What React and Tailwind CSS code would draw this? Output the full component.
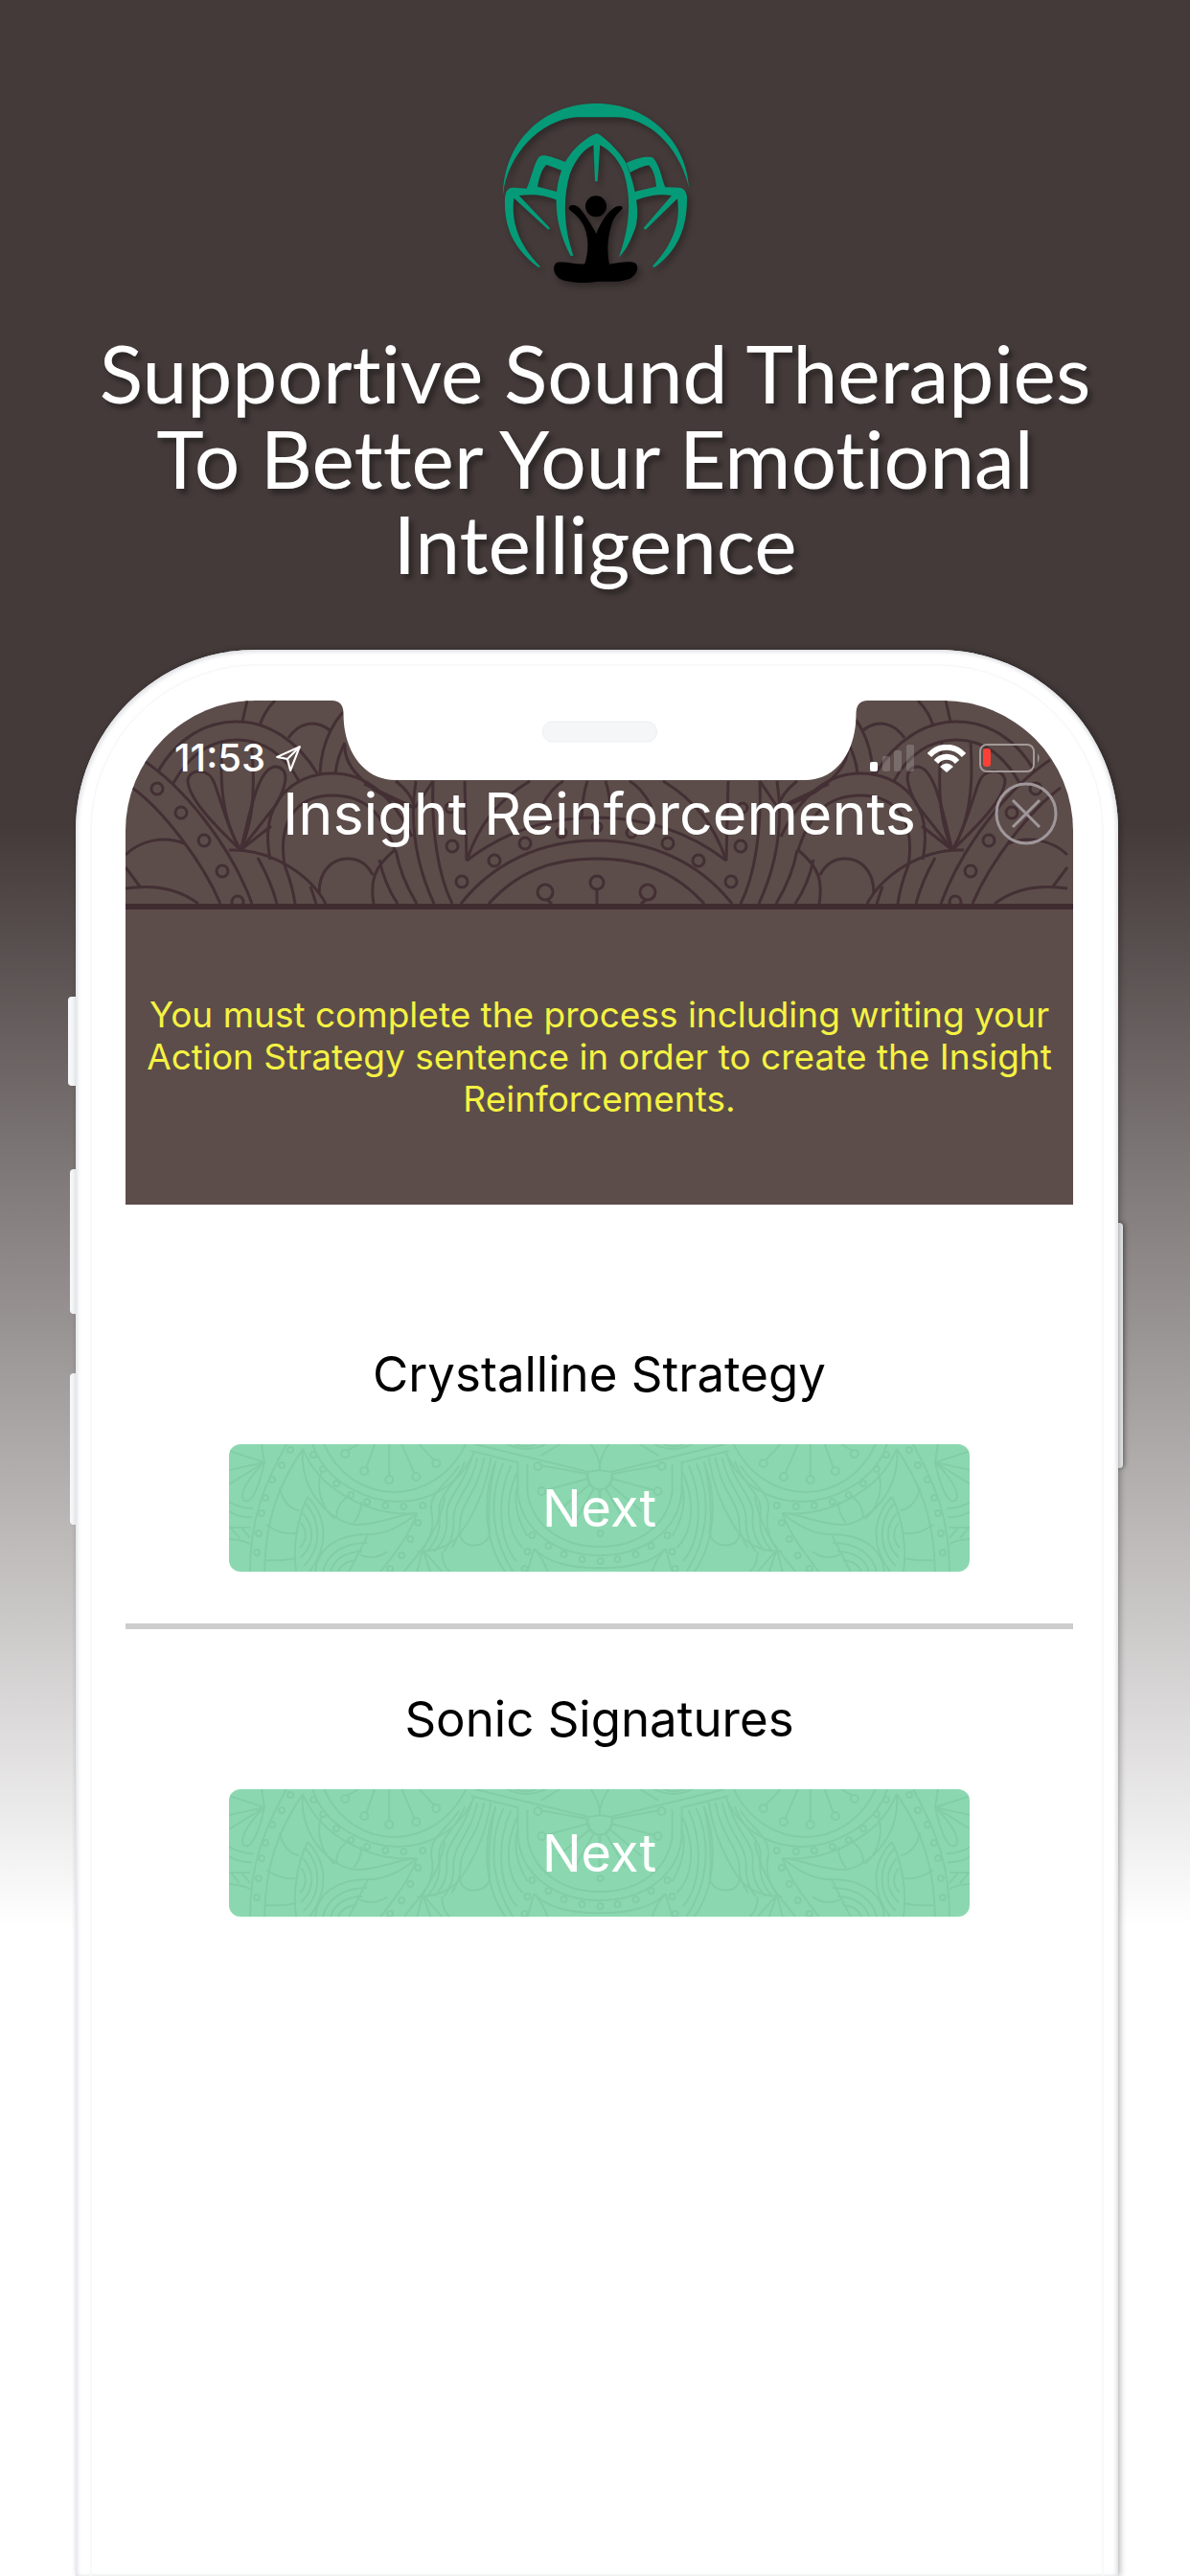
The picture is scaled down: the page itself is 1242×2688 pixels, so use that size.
const STRATEGIES = [
  { id: "crystalline", title: "Crystalline Strategy" },
  { id: "sonic", title: "Sonic Signatures" },
];

// Dots as [cx, cy, r], drawn on one half and mirrored
const HEADER_DOTS = [
  [164, 823, 6],
  [189, 848, 6],
  [213, 877, 6],
  [232, 909, 6],
  [248, 941, 6],
  [470, 843, 5],
  [472, 883, 6],
  [482, 920, 6],
  [516, 898, 6],
  [548, 880, 6],
  [586, 869, 5],
  [569, 931, 8],
];

const HEADER_LINES = [
  // left scallops
  "M165 805C185 770 215 753 247 753S310 772 331 807",
  "M181 817C198 787 220 772 247 772S297 787 312 815",
  "M258 731L253 753M287 731Q276 742 271 757",
  "M301 770C310 757 320 755 326 755S338 757 344 762",
  "M358 743C345 758 335 780 334 807M360 775Q352 790 350 807",
  "M360 777C358 805 395 833 433 843",
  // fan
  "M251 887C225 862 196 833 196 814C198 802 218 800 224 818C232 840 238 865 251 887",
  "M232 775C228 830 236 862 251 887M262 775C268 830 262 862 251 887",
  "M251 887C260 855 268 800 288 800C304 802 298 822 288 840L251 887M283 862L251 887",
  // middle arch
  "M282 897C270 838 305 807 347 807C388 807 414 840 430 873",
  "M297 903C290 860 307 830 347 830C382 830 400 850 412 887",
  "M412 887C390 905 386 920 390 943",
  "M333 932C333 907 348 896 363 896S385 905 389 913",
  "M380 818L433 843M413 815Q430 828 433 843M452 815L433 843",
  "M396 897Q401 922 415 943M413 887Q418 915 435 943",
  "M434 815Q424 880 453 943M452 815C450 870 458 915 472 943",
  // central flower
  "M485 815L487 898C500 860 520 835 553 815",
  "M487 898C530 865 575 853 623 853",
  "M588 815Q575 822 565 842M613 815Q608 830 607 853",
  "M481 943C515 900 565 877 623 877",
  "M510 943C540 910 575 896 623 896",
  "M571 939L576 943",
  // diagonal band and lower left
  "M149 793C190 820 240 880 263 943M138 822C170 845 212 900 230 943",
  "M131 892C145 878 170 871 192 880M131 905L146 925",
  "M131 927C165 922 190 930 207 943",
  "M239 887C285 885 325 915 340 943",
  "M269 895Q283 920 289 943M297 903Q305 923 308 943M324 925L330 943",
];

const BUTTON_DOTS = [
  [121, 10, 4],
  [141, 28, 4],
  [167, 37, 4],
  [195, 34, 4],
  [216, 20, 4],
  [88, 11, 3],
  [98, 26, 3],
  [112, 41, 3],
  [127, 53, 3],
  [144, 60, 3],
  [163, 64, 3],
  [182, 65, 3],
  [202, 64, 3],
  [197, 82, 3],
  [189, 99, 3],
  [180, 116, 3],
  [168, 130, 3],
  [64, 6, 3],
  [55, 22, 3],
  [45, 37, 3],
  [38, 56, 3],
  [34, 72, 3],
  [31, 93, 3],
  [29, 113, 3],
  [316, 95, 3],
  [333, 106, 3],
  [349, 115, 3],
  [368, 120, 3],
  [311, 112, 3],
  [308, 130, 3],
  [322, 23, 4],
  [326, 49, 4],
];

const BUTTON_LINES = [
  // big medallion with stems
  "M99 0C115 35 145 50 172 50S230 35 247 0",
  "M87 0C100 40 145 60 176 60S240 45 256 7",
  "M77 5C95 50 150 76 196 72",
  "M135 0L123 7M152 0L143 25M167 0V33M180 0L193 30M198 0L214 17",
  // left band
  "M77 5C50 45 38 80 37 133M60 0C35 45 22 80 22 133",
  "M37 19L0 7M37 19L0 27M37 19L0 42M37 19L34 0M37 19C25 30 10 50 15 58C22 64 30 50 37 19",
  "M0 60Q12 67 25 67M0 70Q12 77 24 76M0 87H22M2 87L11 98M13 87L22 98M0 99Q12 99 22 104",
  "M53 45C55 60 65 68 73 69M39 84C50 92 62 94 70 93M38 121Q55 122 70 119",
  // leaf under the medallion
  "M77 5C72 50 110 85 135 84S180 72 196 72",
  "M96 30C90 48 98 68 110 78M112 76C112 66 118 58 126 53M130 82Q138 72 138 60",
  "M82 55C72 75 66 105 70 133",
  "M82 55C104 78 103 108 84 133M80 62C96 80 97 108 78 127M77 72C89 86 90 104 75 118M75 82C81 90 82 100 74 108",
  "M90 133C92 110 112 92 150 94M98 133C102 115 118 103 144 103M106 133C109 120 122 112 139 112M114 133Q118 122 133 121M150 94Q172 92 196 72",
  "M136 115Q150 122 165 112M145 94L125 133",
  "M196 72C188 95 172 115 158 133M225 55Q218 90 196 116C190 124 184 130 183 133",
  // curved ribs
  "M240 22C228 42 208 50 211 70Q216 92 200 112",
  "M246 18C236 44 217 52 219 72Q222 96 206 112",
  "M253 14C244 46 225 56 227 76Q229 96 214 112",
  "M259 14C252 48 233 58 234 80Q235 98 224 112",
  "M266 14C260 50 240 62 241 84Q240 98 232 108",
  "M196 112Q225 112 240 95C258 70 268 45 273 14",
  "M241 92C240 110 270 110 272 92Q268 60 278 18M222 112Q222 126 230 133",
  "M278 18C262 60 268 105 288 133M286 20C268 60 276 102 296 133M294 22C276 62 284 105 300 122M300 30C286 62 290 92 306 108M301 42Q294 68 311 96",
  "M202 110L196 133M202 110L210 133M202 110L222 133",
  // central shield
  "M252 7L301 19V50C305 90 340 116 387 116",
  "M311 21V50C316 84 345 107 387 107M256 0L375 29L387 27M324 22L374 31",
  "M374 31C374 53 400 53 400 31M374 36L330 48M377 41L343 70M381 45L360 82M387 46V86",
  "M377 0Q386 12 387 27M318 109C330 122 355 130 387 129M318 109L311 133M318 109Q328 120 332 133",
  "M290 0Q310 10 330 0M298 0Q310 5 320 0M325 12L345 0",
];

function Mirrored({ lines, dots, flip }) {
  const half = (
    <>
      {lines.map((d) => (
        <path key={d} d={d} />
      ))}
      {dots.map(([cx, cy, r]) => (
        <circle key={`${cx}-${cy}`} cx={cx} cy={cy} r={r} />
      ))}
    </>
  );

  return (
    <>
      <g>{half}</g>
      <g transform={`translate(${flip} 0) scale(-1 1)`}>{half}</g>
    </>
  );
}

function HeaderPattern() {
  return (
    <svg
      aria-hidden="true"
      viewBox="131 731 989 212"
      preserveAspectRatio="xMidYMid slice"
      className="absolute inset-0 size-full fill-none stroke-[#432f34] stroke-3"
    >
      <Mirrored lines={HEADER_LINES} dots={HEADER_DOTS} flip={1245} />
      <circle cx="623" cy="921" r="7" />
      <circle cx="623" cy="863" r="5" />
      <path d="M623 928V943" />
    </svg>
  );
}

function ButtonPattern() {
  return (
    <svg
      aria-hidden="true"
      viewBox="0 0 772 133"
      preserveAspectRatio="xMidYMid slice"
      className="absolute inset-0 size-full fill-none stroke-[#82cda6] stroke-2"
    >
      <Mirrored lines={BUTTON_LINES} dots={BUTTON_DOTS} flip={773} />
      <circle cx="387" cy="93" r="3" />
      <circle cx="387" cy="122" r="3" />
    </svg>
  );
}

function Logo() {
  return (
    <svg
      aria-hidden="true"
      viewBox="0 0 720 660"
      className="h-[220px] w-[240px] drop-shadow-[3px_4px_3px_rgba(0,0,0,0.3)]"
    >
      <g fill="#059b78">
        <path d="M72 340C76 170 200 54 365 54C520 54 645 165 654 316C622 185 525 97 425 97H300C190 105 84 215 72 340Z" />
        <path d="M365 148C380 150 440 205 458 242C490 320 505 410 480 460C465 500 450 520 434 536C470 440 475 350 450 270C430 220 395 190 365 180C330 190 300 225 281 275C262 340 258 430 292 530L284 532C235 440 225 340 258 255C280 205 330 160 365 148Z" />
        <path d="M355 178H376L368 298H360Z" />
        <path d="M146 320C160 290 170 240 184 222C195 212 210 214 276 240L266 268C235 255 215 248 207 246C190 265 185 290 180 314L240 330L244 358C200 338 160 337 122 342L219 444L214 449L106 350C96 430 125 500 189 565L183 567C105 510 74 440 78 350C80 325 90 317 105 317Z" />
        <path d="M580 316C568 285 562 245 542 224C530 218 500 220 458 240L470 270C500 255 520 246 530 248C545 265 550 290 552 314L484 330L486 358C530 340 565 337 600 342L512 444L518 449L618 352C630 430 600 500 540 563L546 567C620 515 650 440 648 345C645 325 635 317 620 317Z" />
      </g>
      <g fill="#000">
        <circle cx="363" cy="376" r="33" />
        <path d="M280 376C290 368 303 372 312 382C335 410 352 440 364 462C375 430 400 390 424 378C437 372 450 376 445 384C430 400 418 410 410 440C398 480 398 520 405 557C440 552 470 546 487 554C500 568 490 590 470 602C430 618 400 608 363 612C330 618 280 616 252 604C228 590 226 562 240 552C265 546 300 560 328 556C340 520 340 480 330 450C320 420 300 402 281 388C277 384 277 380 280 376Z" />
      </g>
    </svg>
  );
}

function Notch() {
  return (
    <svg
      aria-hidden="true"
      viewBox="346 731 559 83"
      className="absolute top-0 left-1/2 w-[559px] -translate-x-1/2"
    >
      <path
        d="M346 731Q358 731 358 745C358 785 380 814 412 814H840C872 814 893 785 893 745Q893 731 905 731Z"
        fill="#fff"
      />
      <rect x="566" y="753" width="119" height="21" rx="10" fill="#f5f6f7" stroke="#eceeef" />
    </svg>
  );
}

function StatusBar() {
  return (
    <div className="relative flex h-[30px] items-center justify-between pr-[34px] pl-[51px] text-white">
      <div className="flex items-center gap-[10px]">
        <span className="text-[40px] leading-[30px] font-medium">11:53</span>
        <svg aria-hidden="true" viewBox="0 0 26 27" className="h-[29px] w-[28px] fill-none stroke-white stroke-2">
          <path d="M24 2L2 12L12 14L15 25Z" strokeLinejoin="round" />
          <path d="M24 2L12 14" />
        </svg>
      </div>

      <div className="flex items-center gap-[14px]">
        <svg aria-hidden="true" viewBox="0 0 46 28" className="h-7 w-[46px] fill-white">
          <rect y="18" width="8" height="10" rx="2" />
          <g opacity="0.18">
            <rect x="13" y="12" width="8" height="16" rx="2" />
            <rect x="25" y="6" width="8" height="22" rx="2" />
            <rect x="38" width="8" height="28" rx="2" />
          </g>
        </svg>
        <svg aria-hidden="true" viewBox="0 0 40 29" className="h-[29px] w-10 fill-none stroke-white stroke-6">
          <path d="M2 11C12 0 28 0 38 11" />
          <path d="M9 18C15 11 25 11 31 18" />
          <path d="M13 23Q20 16 27 23L20 29Z" fill="#fff" stroke="none" />
        </svg>
        <svg aria-hidden="true" viewBox="0 0 64 30" className="h-[30px] w-16 fill-none">
          <rect x="1" y="1" width="56" height="28" rx="7" stroke="#a39a99" strokeWidth="2" />
          <rect x="4" y="5" width="8" height="19" rx="3" fill="#fb4137" />
          <path d="M61 10Q64 15 61 20Z" fill="#a39a99" />
        </svg>
      </div>
    </div>
  );
}

function ScreenHeader() {
  return (
    <header className="relative overflow-hidden rounded-t-[136px] bg-[#5c4d4a]">
      <div className="relative border-b-6 border-[#3f2c31] pt-[45px] pb-[61px]">
        <HeaderPattern />
        <Notch />
        <StatusBar />
        <div className="relative mt-[10px] grid grid-cols-[66px_1fr_66px] items-center px-4">
          <h2 className="col-start-2 text-center text-[61px] leading-[66px] whitespace-nowrap text-white">
            Insight Reinforcements
          </h2>
          <button type="button" aria-label="Close" className="size-[66px]">
            <svg viewBox="0 0 66 66" className="size-full fill-none stroke-[#a0979b] stroke-3">
              <circle cx="33" cy="33" r="31" />
              <path d="M19 19L47 47M47 19L19 47" />
            </svg>
          </button>
        </div>
      </div>
      <p className="px-4 py-[88px] text-center text-[37px] leading-11 text-[#f5f242]">
        You must complete the process including writing your Action Strategy
        sentence in order to create the Insight Reinforcements.
      </p>
    </header>
  );
}

function Strategy({ title }) {
  return (
    <section className="px-[108px] text-center">
      <h3 className="text-[51px] leading-[64px] text-black">{title}</h3>
      <button
        type="button"
        className="relative mt-[41px] h-[133px] w-full overflow-hidden rounded-xl bg-[#8bd8b0] text-white"
      >
        <ButtonPattern />
        <span className="relative text-[54px] leading-[64px]">Next</span>
      </button>
    </section>
  );
}

function Phone() {
  return (
    <div className="relative mt-[67px] mr-[75px] ml-[79px] flex flex-1 flex-col">
      {/* side keys */}
      <div className="absolute top-[362px] -left-2 h-[93px] w-3 rounded-l-sm bg-[#f6f7f9]" />
      <div className="absolute top-[542px] -left-1.5 h-[151px] w-3 rounded-l-sm bg-[#f6f7f9]" />
      <div className="absolute top-[755px] -left-1.5 h-[158px] w-3 rounded-l-sm bg-[#f6f7f9]" />
      <div className="absolute top-[598px] -right-[5px] h-[256px] w-3 rounded-r-sm bg-[#f1f3f4] shadow-[2px_0_5px_rgba(0,0,0,0.35)]" />

      <div className="relative flex flex-1 flex-col rounded-t-[188px] bg-white pt-[15px] pr-[15px] pl-[15px] shadow-[inset_2px_2px_4px_#dfe1e5,inset_-2px_0_4px_#dfe1e5,2px_0_6px_rgba(0,0,0,0.3)]">
        <div className="flex-1 rounded-t-[173px] border-2 border-b-0 border-[#f8f9fa] pt-[36px] pr-[30px] pl-[35px]">
          <ScreenHeader />
          <div className="pt-[145px]">
            <Strategy title={STRATEGIES[0].title} />
            <hr className="mt-[54px] mb-[62px] border-t-6 border-[#cdcdcd]" />
            <Strategy title={STRATEGIES[1].title} />
          </div>
        </div>
      </div>
    </div>
  );
}

export default function App() {
  return (
    <main className="flex min-h-screen flex-col overflow-hidden bg-linear-[180deg,#433a39_860px,#ffffff_2010px] font-['Inter',sans-serif]">
      <div className="flex flex-col items-center pt-[90px]">
        <Logo />
        <h1 className="mt-[34px] max-w-[1100px] text-center font-['Lato',sans-serif] text-[84px] leading-[89px] text-white [font-variant-ligatures:none] text-shadow-[4px_5px_5px_rgba(0,0,0,0.35)]">
          Supportive Sound Therapies To Better Your Emotional Intelligence
        </h1>
      </div>
      <Phone />
    </main>
  );
}
